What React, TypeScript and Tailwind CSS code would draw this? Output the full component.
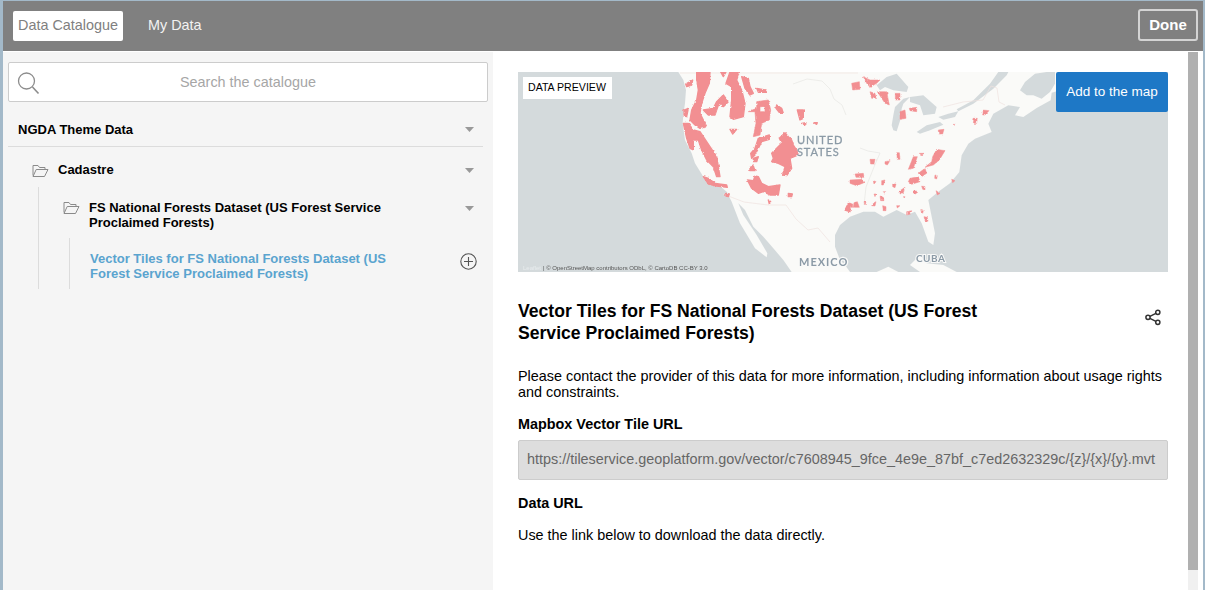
import React from "react";

const Caret = () => (
  <svg width="9" height="5" viewBox="0 0 9 5" className="shrink-0"><path d="M0 0h9L4.5 5z" fill="#999" /></svg>
);

const Folder = () => (
  <svg width="17" height="13" viewBox="0 0 17 13" fill="none" stroke="#8a8a8a" strokeWidth="1" className="shrink-0">
    <path d="M1 11.5V1.5h5l1.5 2H13v2" />
    <path d="M1 12.5h11.5L16 5.5H4.2L1 12.5z" />
  </svg>
);

const west = [
  "560,36 600,36 598,70 585,100 575,130 570,160 585,190 590,200 570,205 555,195 540,180 545,150 560,120 565,90 560,60",
  "527,72 548,60 545,75 530,80",
  "522,150 535,145 530,170 522,168",
  "520,190 535,190 550,210 570,215 580,230 600,260 620,290 625,320 630,350 620,350 610,320 590,300 575,270 565,240 550,240 550,270 540,265 530,235",
  "660,36 688,36 680,60 695,90 705,130 700,170 670,178 660,170 665,120 665,80 648,70",
  "695,50 715,55 720,80 730,100 720,105 705,85",
  "632,36 648,36 640,50",
  "580,150 610,145 620,125 640,105 655,125 640,140 628,128 620,150 615,165 595,165",
  "740,85 765,90 770,97 745,97",
  "800,135 815,145 820,160 810,160 798,145",
  "862,150 880,150 880,175 870,180",
  "875,190 888,188 885,195",
  "912,188 922,188 920,193",
  "660,208 680,208 668,222",
  "745,235 778,225 778,238 755,245 745,265 735,285 725,295 722,280 735,265",
  "730,295 745,290 740,305 730,305",
  "720,322 730,318 735,332 720,332",
  "825,218 835,230 845,240 850,255 860,270 865,285 840,295 845,325 830,347 818,345 825,320 805,310 785,305 790,295 785,280 800,265 815,250 808,235",
  "735,348 745,350 755,370 775,380 810,375 805,405 780,405 760,395 745,400 725,385 712,360 730,362",
  "580,350 595,355 615,370 650,375 652,382 620,378 595,372",
  "648,400 658,402 655,410 648,408",
  "835,400 847,402 845,410 835,410",
  "775,420 782,425 778,432",
  "1015,430 1020,430 1020,455 1005,450",
];

const east = [
  "40,50 60,60 90,60 80,70 60,82 50,70",
  "5,70 28,65 30,88 8,90",
  "60,95 75,100 78,115 65,115",
  "82,95 110,95 118,135 105,130",
  "136,100 150,100 150,120 136,120",
  "150,155 165,150 168,175 150,178",
  "178,145 200,142 200,155 180,152",
  "400,150 417,152 405,165 398,165",
  "372,175 382,175 380,190 370,190",
  "265,210 282,208 278,222 266,222",
  "310,193 314,193 312,197",
  "60,298 75,298 72,312 62,312",
  "105,305 120,302 112,315 105,312",
  "140,278 148,278 150,298 142,298",
  "190,290 202,290 190,325 175,328",
  "208,280 222,280 215,286",
  "260,268 285,272 268,300 250,315 225,322 245,305 248,290",
  "205,340 225,325 230,340 215,350",
  "180,355 205,350 210,365 185,373 175,365",
  "255,345 262,347 260,357 254,355",
  "305,358 315,362 308,368",
  "215,378 225,380 225,390 218,388",
  "192,393 200,393 198,402 192,400",
  "258,392 270,400 262,405",
  "150,392 165,382 160,398 150,402",
  "128,372 138,372 135,383 128,380",
  "95,362 105,360 100,375 95,375",
  "70,362 78,365 72,372",
  "100,395 107,395 105,400",
  "72,402 78,402 75,410",
  "90,408 100,412 102,422 92,422",
  "160,410 165,410 163,414",
  "72,428 78,425 75,438 65,437",
  "42,425 48,427 45,435",
  "0,430 8,432 8,442 0,442",
  "12,428 22,425 28,442 10,442",
  "98,437 108,440 108,452 100,452",
  "140,437 150,437 142,444",
  "170,455 185,452 182,462 170,465",
  "212,452 220,452 218,460",
  "222,470 232,472 234,484 225,482",
  "15,342 40,340 42,352 18,352",
  "0,360 35,358 42,368 20,377 5,372 0,370",
];

const lakes = [
  "50,40 80,15 110,5 145,45 140,60 100,55 75,45 60,55",
  "95,160 100,130 105,105 130,80 150,75 130,95 125,110 122,140 110,178 100,175",
  "150,75 190,70 230,105 225,125 190,130 180,100 150,90",
  "170,180 200,160 240,150 250,158 210,175 180,185",
  "235,135 265,125 295,118 285,135 250,143",
  "295,118 340,95 400,50 440,10 445,0 415,0 390,35 340,85 290,112",
  "480,55 495,30 525,5 560,0 585,0 585,35 570,60 545,80 520,70 500,70",
];

const USMap = () => (
  <svg viewBox="0 0 650 200" width="650" height="200" className="block">
    <defs>
      <filter id="soft" x="-2%" y="-2%" width="104%" height="104%"><feGaussianBlur stdDeviation="0.35" /></filter>
      <filter id="rough" filterUnits="userSpaceOnUse" x="0" y="0" width="650" height="200">
        <feTurbulence type="fractalNoise" baseFrequency="0.35" numOctaves="2" seed="4" />
        <feDisplacementMap in="SourceGraphic" scale="2.5" xChannelSelector="R" yChannelSelector="G" />
        <feGaussianBlur stdDeviation="0.35" />
      </filter>
    </defs>
    <rect width="650" height="200" fill="#d4dadc" />
    <g filter="url(#soft)">
      <g transform="translate(-8 -12) scale(0.33333)">
        <polygon
          fill="#fafaf8"
          points="505,36 520,60 528,90 525,130 520,165 518,190 525,240 545,280 555,310 580,350 620,370 650,395 665,425 690,490 735,565 770,592 772,580 740,525 700,465 685,430 705,450 730,500 760,530 790,565 820,600 845,636 950,636 950,36"
        />
      </g>
      <g transform="translate(342 0) scale(0.33333)">
        <polygon
          fill="#fafaf8"
          points="-120,0 600,0 600,55 575,62 572,85 530,108 490,135 465,130 480,105 445,100 400,125 385,155 395,180 345,200 325,215 305,250 298,300 295,304 270,334 235,359 205,384 225,484 220,519 205,509 185,454 165,419 140,429 110,414 70,434 45,419 10,419 -30,434 -60,459 -75,489 -75,524 -60,564 -45,579 -30,600 -120,600"
        />
        <polygon fill="#fafaf8" points="50,600 85,584 115,600" />
        <polygon fill="#fafaf8" points="150,579 180,549 200,574 250,579 290,600 180,600" />
        {lakes.map((p, i) => (
          <polygon key={i} points={p} fill="#d4dadc" />
        ))}
      </g>
      <g fill="none" stroke="#efe3e0" strokeWidth="0.7">
        <path d="M205 122L226 130 250 133 268 133 278 147 290 158 300 156 312 170" />
        <path d="M162 1H340" />
        <path d="M445 30l20-2 8-14 6 2 2 14 6 3M425 35l20-5" />
      </g>
      <g fill="none" stroke="#e6e6e4" strokeWidth="0.7">
        <path d="M275 12l14-5 15 2 8 8 4 10 8 6 4 10M342 76l8 3 12 2-6 14-8 20 -2 18" />
      </g>
    </g>
    <g filter="url(#rough)" fill="#f28f92" stroke="#f28f92" strokeLinejoin="round">
      <g transform="translate(-8 -12) scale(0.33333)" strokeWidth="4">
        {west.map((p, i) => (
          <polygon key={i} points={p} />
        ))}
        <path fillRule="evenodd" strokeWidth="2" d="M740 125L775 120 782 150 778 180 755 190 750 225 730 230 738 190 735 155 715 155 740 145zM750 140V155H765V140z" />
      </g>
      <g transform="translate(332 -12) scale(0.33333)" strokeWidth="1.5">
        {east.map((p, i) => (
          <polygon key={i} points={p} />
        ))}
      </g>
    </g>
    <g filter="url(#soft)">
      <g fontFamily="Lato, Liberation Sans, sans-serif" fill="#8b9aa6" stroke="#8b9aa6" strokeWidth="0.3" letterSpacing="0.9">
        <text x="279" y="72" fontSize="11">UNITED</text>
        <text x="279" y="84" fontSize="11">STATES</text>
      </g>
      <g fontFamily="Lato, Liberation Sans, sans-serif" fill="#8b9aa6" fontWeight="700">
        <text x="281" y="194" fontSize="11" stroke="#f9f9f8" strokeWidth="2.5" paintOrder="stroke" letterSpacing="1">MEXICO</text>
        <text x="398" y="190" fontSize="10" stroke="#f9f9f8" strokeWidth="2" paintOrder="stroke" letterSpacing="0.5">CUBA</text>
      </g>
      <text x="5" y="198" fontFamily="Liberation Sans, sans-serif" fontSize="6" fill="#e8ecee">Leaflet</text>
      <text x="25" y="197.5" fontFamily="Liberation Sans, sans-serif" fontSize="6" fill="#555">| © OpenStreetMap contributors ODbL, © CartoDB CC-BY 3.0</text>
    </g>
  </svg>
);

export default function App() {
  return (
    <div className="h-[590px] w-[1205px] overflow-hidden bg-[#a3b9c9] pl-[3px] pr-[2px] pt-[1px] font-['Liberation_Sans',Arial,sans-serif] text-[#000]">
      <div className="flex h-full flex-col bg-white">
        <header className="flex h-[50px] shrink-0 items-start bg-[#808080] pl-[10px] pr-[5px]">
          <div className="mt-[10px] flex h-[30px] w-[110px] items-center justify-center rounded-[2px] bg-white text-[14.4px] text-[#808080]">Data Catalogue</div>
          <div className="ml-[25px] mt-[10px] flex h-[30px] items-center text-[14.4px] text-[#f2f2f2]">My Data</div>
          <button className="ml-auto mt-[8px] flex h-[32px] w-[60px] items-center justify-center rounded-[3px] border-2 border-[#d4d4d4] text-[15px] font-bold text-white">Done</button>
        </header>
        <div className="mt-[1px] flex min-h-0 flex-1">
          <aside className="w-[490px] shrink-0 bg-[#f5f5f5] pl-[5px] pr-[5px] pt-[10px]">
            <div className="relative flex h-[40px] items-center justify-center rounded-[2px] border border-[#cccccc] bg-white pt-[1px] text-[14.4px] text-[#a6a6a6]">
              <svg width="23" height="24" viewBox="0 0 23 24" fill="none" stroke="#8c8c8c" className="absolute left-[8px] top-[8px]">
                <circle cx="9.5" cy="10" r="8" strokeWidth="1.3" />
                <path d="M15.5 16l6 6.5" strokeWidth="1.6" />
              </svg>
              Search the catalogue
            </div>
            <div className="mr-[5px] flex h-[45px] items-center justify-between border-b border-[#dcdcdc] pl-[10px] pr-[9px] pt-[11px] text-[13px] font-bold">
              <span>NGDA Theme Data</span>
              <Caret />
            </div>
            <div className="flex h-[40px] items-center pl-[24px] pr-[14px] pt-[6px] text-[13px] font-bold">
              <Folder />
              <span className="ml-[9px]">Cadastre</span>
              <span className="ml-auto"><Caret /></span>
            </div>
            <div className="ml-[30px] border-l border-[#dcdcdc] pl-[24px] pr-[14px]">
              <div className="flex items-start pt-[13px] text-[13px] font-bold leading-[15px]">
                <span className="mt-[1px]"><Folder /></span>
                <span className="ml-[9px] w-[320px]">FS National Forests Dataset (US Forest Service Proclaimed Forests)</span>
                <span className="ml-auto mt-[6px]"><Caret /></span>
              </div>
              <div className="ml-[6px] mt-[8px] flex h-[51px] items-start justify-between border-l border-[#dcdcdc] pl-[20px] pt-[13px]">
                <span className="w-[320px] text-[13px] font-bold leading-[15px] text-[#5aa4cf]">Vector Tiles for FS National Forests Dataset (US Forest Service Proclaimed Forests)</span>
                <svg width="17" height="17" viewBox="0 0 17 17" fill="none" stroke="#555" strokeWidth="1.1" className="mr-[-3px] mt-[2px]">
                  <circle cx="8.5" cy="8.5" r="7.7" />
                  <path d="M8.5 4v9M4 8.5h9" />
                </svg>
              </div>
            </div>
          </aside>
          <main className="min-w-0 flex-1 pl-[25px] pr-[20px] pt-[20px]">
            <div className="relative h-[200px] w-[650px]">
              <USMap />
              <div className="absolute left-[5px] top-[5px] flex h-[22px] w-[89px] items-center bg-white pl-[5px] text-[10.6px]">
                <span className="whitespace-nowrap">DATA PREVIEW</span>
              </div>
              <button className="absolute right-0 top-0 h-[40px] w-[112px] rounded-[2px] bg-[#1e78c6] text-[13.5px] text-white">Add to the map</button>
            </div>
            <div className="mt-[28px] flex items-start justify-between">
              <h1 className="w-[480px] text-[17.6px] font-bold leading-[22px]">Vector Tiles for FS National Forests Dataset (US Forest Service Proclaimed Forests)</h1>
              <svg width="16" height="17" viewBox="0 0 16 17" fill="none" stroke="#333" strokeWidth="1.5" className="mr-[7px] mt-[9px]">
                <circle cx="12.8" cy="3.3" r="2.1" />
                <circle cx="12.8" cy="13.3" r="2.1" />
                <circle cx="3" cy="8.3" r="2.1" />
                <path d="M4.9 7.3l6-3M4.9 9.3l6 3" />
              </svg>
            </div>
            <p className="mt-[24px] text-[14.4px] leading-[16px]">Please contact the provider of this data for more information, including information about usage rights and constraints.</p>
            <h2 className="mt-[16px] text-[14.4px] font-bold leading-[17px]">Mapbox Vector Tile URL</h2>
            <div className="mt-[7px] flex h-[40px] items-center overflow-hidden whitespace-nowrap rounded-[2px] border border-[#cccccc] bg-[#dddddd] pl-[8px] text-[14.4px] text-[#666666]">https://tileservice.geoplatform.gov/vector/c7608945_9fce_4e9e_87bf_c7ed2632329c/{"{z}/{x}/{y}"}.mvt</div>
            <h2 className="mt-[15px] text-[14.4px] font-bold leading-[17px]">Data URL</h2>
            <p className="mt-[15px] text-[14.4px] leading-[17px]">Use the link below to download the data directly.</p>
          </main>
          <div className="mr-[5px] flex w-[10px] shrink-0 flex-col bg-[#f0f0f0]">
            <div className="h-[518px] bg-[#b0b0b0]" />
          </div>
        </div>
      </div>
    </div>
  );
}
